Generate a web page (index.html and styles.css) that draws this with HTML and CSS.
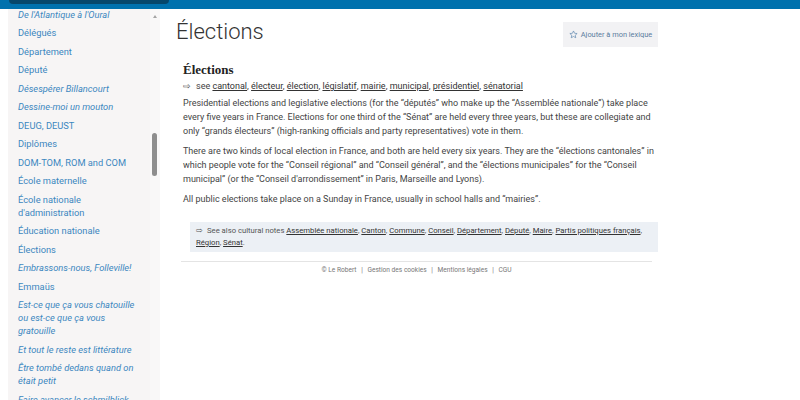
FILE: index.html
```html
<!DOCTYPE html>
<html lang="en">
<head>
    <meta charset="UTF-8" />
    <title>Élections</title>
    <link rel="stylesheet" href="styles.css">
</head>
<body>
    <header class="topbar">
        <div class="search"></div>
    </header>
    <div class="layout">
        <aside class="sidebar">
            <ul class="notes">
                <li class="it">De l'Atlantique à l'Oural</li>
                <li>Délégués</li>
                <li>Département</li>
                <li>Député</li>
                <li class="it">Désespérer Billancourt</li>
                <li class="it">Dessine-moi un mouton</li>
                <li>DEUG, DEUST</li>
                <li>Diplômes</li>
                <li>DOM-TOM, ROM and COM</li>
                <li>École maternelle</li>
                <li>École nationale d'administration</li>
                <li>Éducation nationale</li>
                <li>Élections</li>
                <li class="it">Embrassons-nous, Folleville!</li>
                <li>Emmaüs</li>
                <li class="it">Est-ce que ça vous chatouille ou est-ce que ça vous gratouille</li>
                <li class="it">Et tout le reste est littérature</li>
                <li class="it">Être tombé dedans quand on était petit</li>
                <li class="it">Faire avancer le schmilblick</li>
            </ul>
            <!-- fausse barre de défilement -->
            <div class="scroll">
                <span class="arrow"></span>
                <span class="thumb"></span>
            </div>
        </aside>
        <main class="content">
            <div class="head">
                <h1>Élections</h1>
                <button class="fav">
                    <svg width="9" height="9" viewBox="0 0 24 24"><path d="M12 2.5l2.9 6.2 6.8.7-5.1 4.6 1.5 6.7L12 17.3l-6.1 3.4 1.5-6.7-5.1-4.6 6.8-.7z" fill="none" stroke="#5b84ad" stroke-width="1.8" stroke-linejoin="round"/></svg>
                    Ajouter à mon lexique
                </button>
            </div>
            <article class="entry">
                <h2>Élections</h2>
                <p class="see"><span class="arr">⇨</span>see <a>cantonal</a>, <a>électeur</a>, <a>élection</a>, <a>législatif</a>, <a>mairie</a>, <a>municipal</a>, <a>présidentiel</a>, <a>sénatorial</a></p>
                <p>Presidential elections and legislative elections (for the “députés” who make up the “Assemblée nationale”) take place every five years in France. Elections for one third of the “Sénat” are held every three years, but these are collegiate and only “grands électeurs” (high-ranking officials and party representatives) vote in them.</p>
                <p>There are two kinds of local election in France, and both are held every six years. They are the “élections cantonales” in which people vote for the “Conseil régional” and “Conseil général”, and the “élections municipales” for the “Conseil municipal” (or the “Conseil d'arrondissement” in Paris, Marseille and Lyons).</p>
                <p>All public elections take place on a Sunday in France, usually in school halls and “mairies”.</p>
                <div class="also"><span class="arr">⇨</span>See also cultural notes <a>Assemblée nationale</a>, <a>Canton</a>, <a>Commune</a>, <a>Conseil</a>, <a>Département</a>, <a>Député</a>, <a>Maire</a>, <a>Partis politiques français</a>, <a>Région</a>, <a>Sénat</a>.</div>
            </article>
            <footer class="foot">
                © Le Robert <span>|</span> Gestion des cookies <span>|</span> Mentions légales <span>|</span> CGU
            </footer>
        </main>
    </div>
</body>
</html>
```

FILE: styles.css
```css
*{
    margin:0;
    padding:0;
    box-sizing: border-box;
}
body{
    font-family: Roboto, "Liberation Sans", sans-serif;
    color: #333;
    background: #fff;
    height: 400px;
    overflow: hidden;
}
.topbar{
    height: 9px;
    background-color: #0071ad;
    padding-left: 9px;
}
.search{
    width: 160px;
    height: 4px;
    background-color: #06476b;
    border-radius: 0 0 4px 4px;
}
.layout{
    display: flex;
    height: 391px;
}
.sidebar{
    width: 152px;
    margin-left: 8px;
    background-color: #f7f5f5;
    position: relative;
    overflow: hidden;
}
.notes{
    list-style: none;
    padding: 0 20px 0 10px;
    margin-top: -4px;
}
.notes li{
    font-size: 9.3px;
    line-height: 13px;
    color: #3c87c0;
    padding: 2.75px 0;
}
.notes .it{
    font-style: italic;
}
.scroll{
    position: absolute;
    right: 0;
    top: 0;
    width: 10px;
    height: 100%;
    background-color: #f9f8f8;
}
.arrow{
    position: absolute;
    left: 3px;
    top: 6px;
    border-left: 2px solid transparent;
    border-right: 2px solid transparent;
    border-bottom: 3px solid #a5a5a5;
}
.thumb{
    position: absolute;
    left: 2px;
    top: 124px;
    width: 5px;
    height: 43px;
    border-radius: 3px;
    background-color: #8e8e8e;
}
.content{
    width: 498px;
    padding: 9px 0 0 16px;
}
.head{
    display: flex;
    justify-content: space-between;
    align-items: flex-start;
}
h1{
    font-weight: 300;
    font-size: 22px;
    line-height: 26px;
    color: #333;
    padding-top: 1px;
}
.fav{
    margin-top: 4px;
    height: 25px;
    width: 95px;
    border: none;
    background-color: #f2f2f4;
    color: #5a7d9e;
    font-family: Roboto, "Liberation Sans", sans-serif;
    font-size: 7.4px;
    display: flex;
    align-items: center;
    justify-content: center;
    gap: 3px;
}
.entry{
    padding: 15px 0 0 7px;
    width: 478px;
}
.entry h2{
    font-family: "Liberation Serif", serif;
    font-weight: bold;
    font-size: 13px;
    line-height: 16px;
    color: #222;
}
.entry p{
    font-size: 9px;
    line-height: 14px;
    color: #444;
    margin-bottom: 6px;
}
.entry .see{
    margin: 1px 0 3px;
}
.arr{
    margin-right: 5px;
}
.entry a{
    text-decoration: underline;
    color: #333;
}
.also{
    margin: 16px 0 0 7px;
    width: 468px;
    background-color: #ecf0f5;
    padding: 3px 4px 3px 6px;
    font-size: 7.7px;
    line-height: 12px;
    color: #555;
}
.also .arr{
    margin-right: 4px;
}
.foot{
    margin: 9px 6px 0 5px;
    border-top: 1px solid #e4e4e4;
    padding-top: 4px;
    font-size: 6.6px;
    color: #777;
    text-align: center;
}
.foot span{
    margin: 0 3px;
}
```
